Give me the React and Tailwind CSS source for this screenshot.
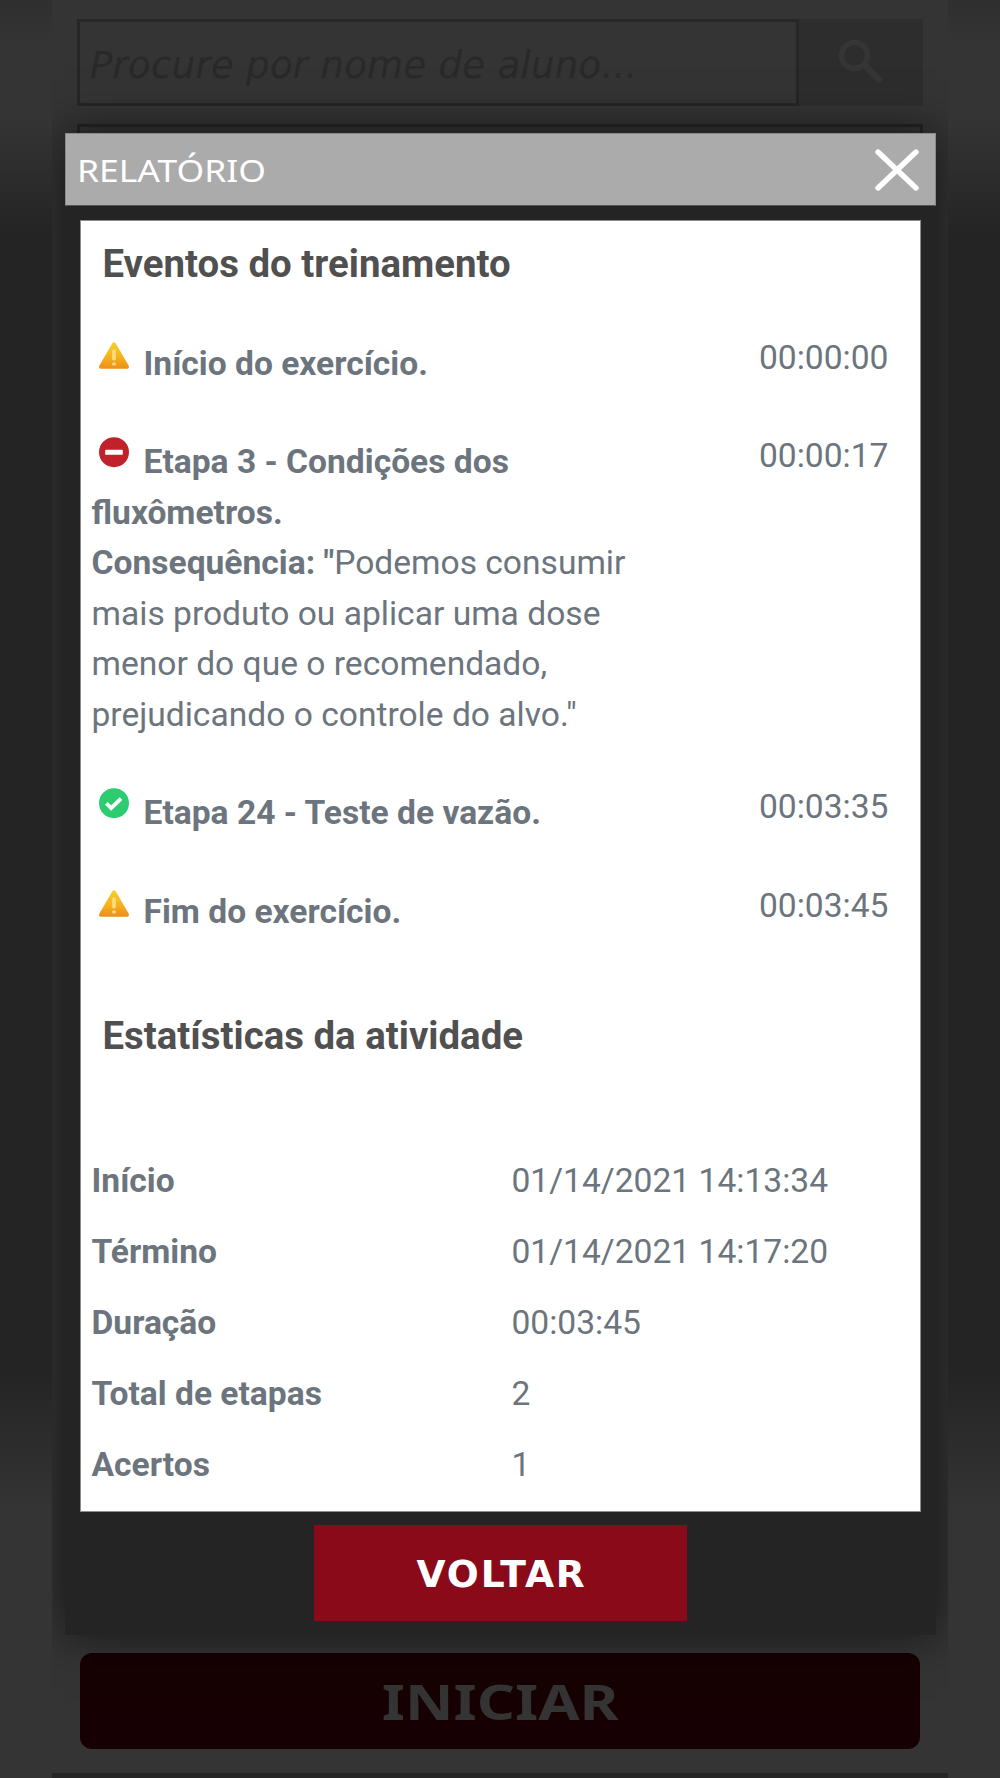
const events = [
  { icon: 'warning', title: 'Início do exercício.', time: '00:00:00' },
  {
    icon: 'error',
    title: 'Etapa 3 - Condições dos fluxômetros.',
    consequence: 'Podemos consumir mais produto ou aplicar uma dose menor do que o recomendado, prejudicando o controle do alvo."',
    time: '00:00:17',
  },
  { icon: 'success', title: 'Etapa 24 - Teste de vazão.', time: '00:03:35' },
  { icon: 'warning', title: 'Fim do exercício.', time: '00:03:45' },
];

const stats = [
  { label: 'Início', value: '01/14/2021 14:13:34' },
  { label: 'Término', value: '01/14/2021 14:17:20' },
  { label: 'Duração', value: '00:03:45' },
  { label: 'Total de etapas', value: '2' },
  { label: 'Acertos', value: '1' },
];

function EventIcon({ type }) {
  return (
    <svg viewBox="0 0 32 32" className="inline-block align-top w-8 h-8 ml-[6.5px] mr-[13.5px]">
      {type === 'warning' && (
        <>
          <defs>
            <linearGradient id="warn" x1="0" y1="0" x2="0" y2="1">
              <stop offset="0" stopColor="#f6d02a" />
              <stop offset="0.55" stopColor="#f5b21e" />
              <stop offset="1" stopColor="#ec8f17" />
            </linearGradient>
          </defs>
          <path
            d="M14.2 4.6 Q16 2 17.8 4.6 L30.6 26.6 Q31.8 29.6 29 29.8 H3 Q0.2 29.6 1.4 26.6 Z"
            fill="url(#warn)"
          />
          <rect x="14.2" y="10.5" width="3.6" height="11" rx="1.4" fill="#fbdc86" />
          <rect x="14.2" y="23.4" width="3.6" height="3.2" rx="1.2" fill="#fbdc86" />
        </>
      )}
      {type === 'error' && (
        <>
          <circle cx="16" cy="15.2" r="15" fill="#c1212b" />
          <rect x="7.2" y="12.8" width="17.6" height="5" rx="0.6" fill="#fff" />
        </>
      )}
      {type === 'success' && (
        <>
          <circle cx="16" cy="15.2" r="15" fill="#2ecc71" />
          <path d="M8.4 15.4 L13.2 20.2 L23 10.6" fill="none" stroke="#fff" strokeWidth="3.8" />
        </>
      )}
    </svg>
  );
}

function ReportModal() {
  return (
    <div className="absolute left-[65px] top-[133px] w-[871px] h-[1502px] bg-[#242424] shadow-[0_0_44px_rgba(0,0,0,0.6)] flex flex-col items-center">
      {/* Header */}
      <div className="w-full h-[73px] bg-[#ababab] border border-[#8a8a8a] border-b-[#555] flex items-center justify-between pl-[11px] pr-[15px]">
        <h1 className="font-['Noto_Sans'] text-white text-[31.5px] leading-none origin-left scale-x-[1.125]">RELATÓRIO</h1>
        <svg viewBox="0 0 46 44" className="w-[46px] h-[44px]">
          <path d="M4 4 L42 40 M42 4 L4 40" stroke="#fff" strokeWidth="5.4" strokeLinecap="round" />
        </svg>
      </div>

      {/* Report */}
      <div className="mt-[14px] w-[841px] h-[1292px] bg-white border border-[#8d8d8d] pt-[18px] pl-[10.5px] font-[Roboto] text-[33.6px] leading-[50.5px] text-[#6c757d]">
        <h2 className="pl-[11px] text-[38.4px] leading-[49px] font-bold text-[#505050]">Eventos do treinamento</h2>
        <div className="mt-[44.5px] flex flex-col gap-[42px]">
          {events.map((event) => (
            <div key={event.time} className="flex items-start">
              <div className="w-[560px] mr-[107.5px] pt-[6px]">
                <strong>
                  <EventIcon type={event.icon} />
                  {event.title}
                </strong>
                {event.consequence && (
                  <p>
                    <strong>Consequência: "</strong>
                    {event.consequence}
                  </p>
                )}
              </div>
              <span>{event.time}</span>
            </div>
          ))}
        </div>

        <h2 className="mt-[74px] pl-[11px] text-[38.4px] leading-[49px] font-bold text-[#505050]">Estatísticas da atividade</h2>
        <dl className="mt-[95.5px] grid grid-cols-[420px_1fr] gap-y-[20.5px]">
          {stats.map((stat) => (
            <div key={stat.label} className="contents">
              <dt className="font-bold">{stat.label}</dt>
              <dd>{stat.value}</dd>
            </div>
          ))}
        </dl>
      </div>

      <button className="mt-[13px] w-[373px] h-[96px] pt-[5px] bg-[#8b0a1a] text-white font-['DejaVu_Sans'] font-bold text-[36.5px] leading-none">
        <span className="inline-block scale-x-[1.03] tracking-[0.05em] -mr-[0.05em]">VOLTAR</span>
      </button>
    </div>
  );
}

export default function App() {
  return (
    <div className="relative w-[1000px] h-[1778px] overflow-hidden bg-[linear-gradient(to_bottom,#2f2f2f_0,#343434_40px,#343434_120px,#242424_235px,#242424_1370px,#343434_1510px,#343434_1778px)]">
      <main className="relative mx-auto w-[896px] h-full overflow-hidden bg-[#343434] flex flex-col px-[25px] pt-[19px]">
        <div className="flex h-[87px] shrink-0">
          <div className="w-[722px] border-[3px] border-[#262626] flex items-center pl-[10px] pt-[6px] font-['DejaVu_Sans'] italic text-[37px] tracking-[0.3px] text-[#292929] whitespace-nowrap">
            Procure por nome de aluno...
          </div>
          <div className="flex-1 bg-[#2d2d2d] flex justify-center pt-[21px]">
            <svg viewBox="0 0 46 44" className="w-[46px] h-[44px]" fill="none" stroke="#353535">
              <circle cx="16.5" cy="15.5" r="13" strokeWidth="5.5" />
              <path d="M26 24.5 L43 41.5" strokeWidth="7" />
            </svg>
          </div>
        </div>
        <div className="mt-[18px] h-[87px] shrink-0 border-[3px] border-[#242424]" />
        <button className="mt-auto mx-[3px] mb-[24px] h-[96px] shrink-0 rounded-xl bg-[#160003] text-[#343434] font-['Noto_Sans'] font-bold text-[48.5px] leading-none">
          <span className="inline-block scale-x-[1.23]">INICIAR</span>
        </button>
        <div className="-mx-[25px] h-[5px] shrink-0 bg-[#262626]" />
        <div className="absolute inset-y-0 -left-[52px] w-[1000px]">
          <ReportModal />
        </div>
      </main>
    </div>
  );
}
